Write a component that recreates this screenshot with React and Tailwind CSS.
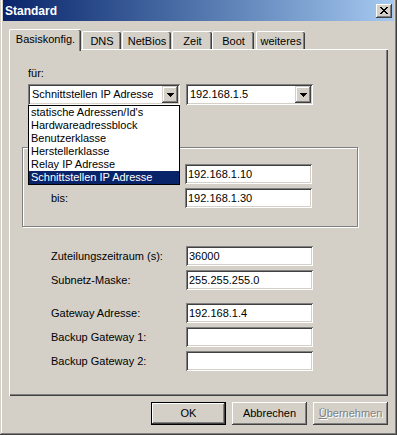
import React from 'react';

const font = "font-['Liberation_Sans',Arial,sans-serif] text-[11px] text-black";
const raised = 'shadow-[inset_-1px_-1px_0_#404040,inset_1px_1px_0_#ffffff,inset_-2px_-2px_0_#808080,inset_2px_2px_0_#d4d0c8]';
const sunken = 'shadow-[inset_1px_1px_0_#808080,inset_-1px_-1px_0_#ffffff,inset_2px_2px_0_#404040,inset_-2px_-2px_0_#d4d0c8]';

function Arrow() {
  return (
    <svg width="7" height="4" viewBox="0 0 7 4" shapeRendering="crispEdges">
      <path d="M0 0h7v1H0zM1 1h5v1H1zM2 2h3v1H2zM3 3h1v1H3z" fill="#000" />
    </svg>
  );
}

function Combo({ value, width }) {
  return (
    <div className={`${sunken} bg-white h-[21px] flex items-center p-[2px]`} style={{ width }}>
      <span className="flex-1 pl-[2px] leading-[13px] whitespace-nowrap overflow-hidden">{value}</span>
      <div className="w-[16px] h-[17px] bg-[#d4d0c8] shadow-[inset_-1px_-1px_0_#404040,inset_1px_1px_0_#d4d0c8,inset_-2px_-2px_0_#808080,inset_2px_2px_0_#ffffff] flex items-center justify-center">
        <Arrow />
      </div>
    </div>
  );
}

function Field({ value }) {
  return (
    <div className={`${sunken} bg-white w-[127px] h-[20px] pl-[3px] flex items-center leading-[13px]`}>
      {value}
    </div>
  );
}

function Row({ label, value, labelWidth, className }) {
  return (
    <div className={`flex items-center h-[20px] ${className}`}>
      <span className="leading-[13px] whitespace-nowrap" style={{ width: labelWidth }}>{label}</span>
      <Field value={value} />
    </div>
  );
}

function Tab({ label, width, active }) {
  if (active) {
    return (
      <div
        className="relative z-10 h-[22px] -mb-[2px] bg-[#d4d0c8] border-l border-t border-white rounded-tl-[2px] rounded-tr-[2px] shadow-[inset_-1px_0_0_#404040,inset_-2px_0_0_#808080] flex justify-center pt-[3px] leading-[13px]"
        style={{ width }}
      >
        {label}
      </div>
    );
  }
  return (
    <div
      className="h-[18px] bg-[#d4d0c8] border-l border-t border-white rounded-tl-[2px] rounded-tr-[2px] shadow-[inset_-1px_0_0_#404040,inset_-2px_0_0_#808080] flex justify-center pt-[3px] leading-[13px]"
      style={{ width }}
    >
      {label}
    </div>
  );
}

function Button({ children, isDefault, disabled }) {
  return (
    <div
      className={`w-[75px] h-[23px] bg-[#d4d0c8] flex items-center justify-center leading-[13px] ${raised} ${isDefault ? 'outline outline-1 outline-black -outline-offset-1 shadow-[inset_-2px_-2px_0_#404040,inset_2px_2px_0_#ffffff,inset_-3px_-3px_0_#808080]' : ''} ${disabled ? 'text-[#808080] [text-shadow:1px_1px_0_#ffffff]' : ''}`}
    >
      {children}
    </div>
  );
}

const items = [
  'statische Adressen/Id\'s',
  'Hardwareadressblock',
  'Benutzerklasse',
  'Herstellerklasse',
  'Relay IP Adresse',
  'Schnittstellen IP Adresse',
];

export default function App() {
  return (
    <div className={`${font} w-[397px] h-[435px] bg-[#d4d0c8] px-[3px] pb-[3px] shadow-[inset_-1px_-1px_0_#404040,inset_1px_0_0_#d4d0c8,inset_-2px_-2px_0_#808080,inset_2px_0_0_#ffffff]`}>
      {/* title bar */}
      <div className="h-[21px] bg-gradient-to-r from-[#0a246a] to-[#a6caf0] flex items-center justify-between pl-[2px] pr-[2px]">
        <span className="text-white font-bold text-[12px]">Standard</span>
        <div className={`w-[16px] h-[14px] bg-[#d4d0c8] ${raised} flex items-center justify-center`}>
          <svg width="8" height="7" viewBox="0 0 8 7" shapeRendering="crispEdges">
            <path d="M0 0h2v1H0zM6 0h2v1H6zM1 1h2v1H1zM5 1h2v1H5zM2 2h4v1H2zM3 3h2v1H3zM2 4h4v1H2zM1 5h2v1H1zM5 5h2v1H5zM0 6h2v1H0zM6 6h2v1H6z" fill="#000" />
          </svg>
        </div>
      </div>

      <div className="ml-[6px] w-[379px]">
        {/* tabs */}
        <div className="mt-[8px] h-[20px] flex items-end">
          <Tab label="Basiskonfig." width={72} active />
          <div className="ml-[1px]"><Tab label="DNS" width={39} /></div>
          <div className="ml-[1px]"><Tab label="NetBios" width={49} /></div>
          <div className="ml-[1px]"><Tab label="Zeit" width={40} /></div>
          <div className="ml-[0px]"><Tab label="Boot" width={42} /></div>
          <div className="ml-[2px]"><Tab label="weiteres" width={49} /></div>
        </div>

        {/* panel */}
        <div className="relative h-[347px] border-l border-t border-white shadow-[inset_-1px_-1px_0_#404040,inset_-2px_-2px_0_#808080]">
          <div className="ml-[18px] mt-[17px] leading-[13px]">für:</div>
          <div className="ml-[18px] mt-[4px] flex gap-[6px]">
            <Combo value="Schnittstellen IP Adresse" width={152} />
            <Combo value="192.168.1.5" width={127} />
          </div>

          <div className="ml-[12px] mt-[42px] w-[336px] h-[80px] border border-[#808080] shadow-[inset_1px_1px_0_#ffffff,1px_1px_0_#ffffff]">
            <Row className="mt-[16px] ml-[28px]" labelWidth={134} label="" value="192.168.1.10" />
            <Row className="mt-[4px] ml-[28px]" labelWidth={134} label="bis:" value="192.168.1.30" />
          </div>

          <div className="ml-[41px]">
            <Row className="mt-[19px]" labelWidth={135} label="Zuteilungszeitraum (s):" value="36000" />
            <Row className="mt-[4px]" labelWidth={135} label="Subnetz-Maske:" value="255.255.255.0" />
            <Row className="mt-[13px]" labelWidth={135} label="Gateway Adresse:" value="192.168.1.4" />
            <Row className="mt-[4px]" labelWidth={135} label="Backup Gateway 1:" value="" />
            <Row className="mt-[4px]" labelWidth={135} label="Backup Gateway 2:" value="" />
          </div>

          {/* open dropdown list */}
          <div className="absolute left-[18px] top-[55px] w-[152px] h-[80px] bg-white border border-black z-20">
            {items.map((it, i) => (
              <div
                key={it}
                className={`h-[13px] leading-[13px] pl-[2px] whitespace-nowrap ${i === items.length - 1 ? 'bg-[#0a246a] text-white' : ''}`}
              >
                {it}
              </div>
            ))}
          </div>
        </div>

        {/* buttons */}
        <div className="mt-[6px] flex justify-end gap-[6px]">
          <Button isDefault>OK</Button>
          <Button>Abbrechen</Button>
          <Button disabled><span><span className="underline">Ü</span>bernehmen</span></Button>
        </div>
      </div>
    </div>
  );
}
